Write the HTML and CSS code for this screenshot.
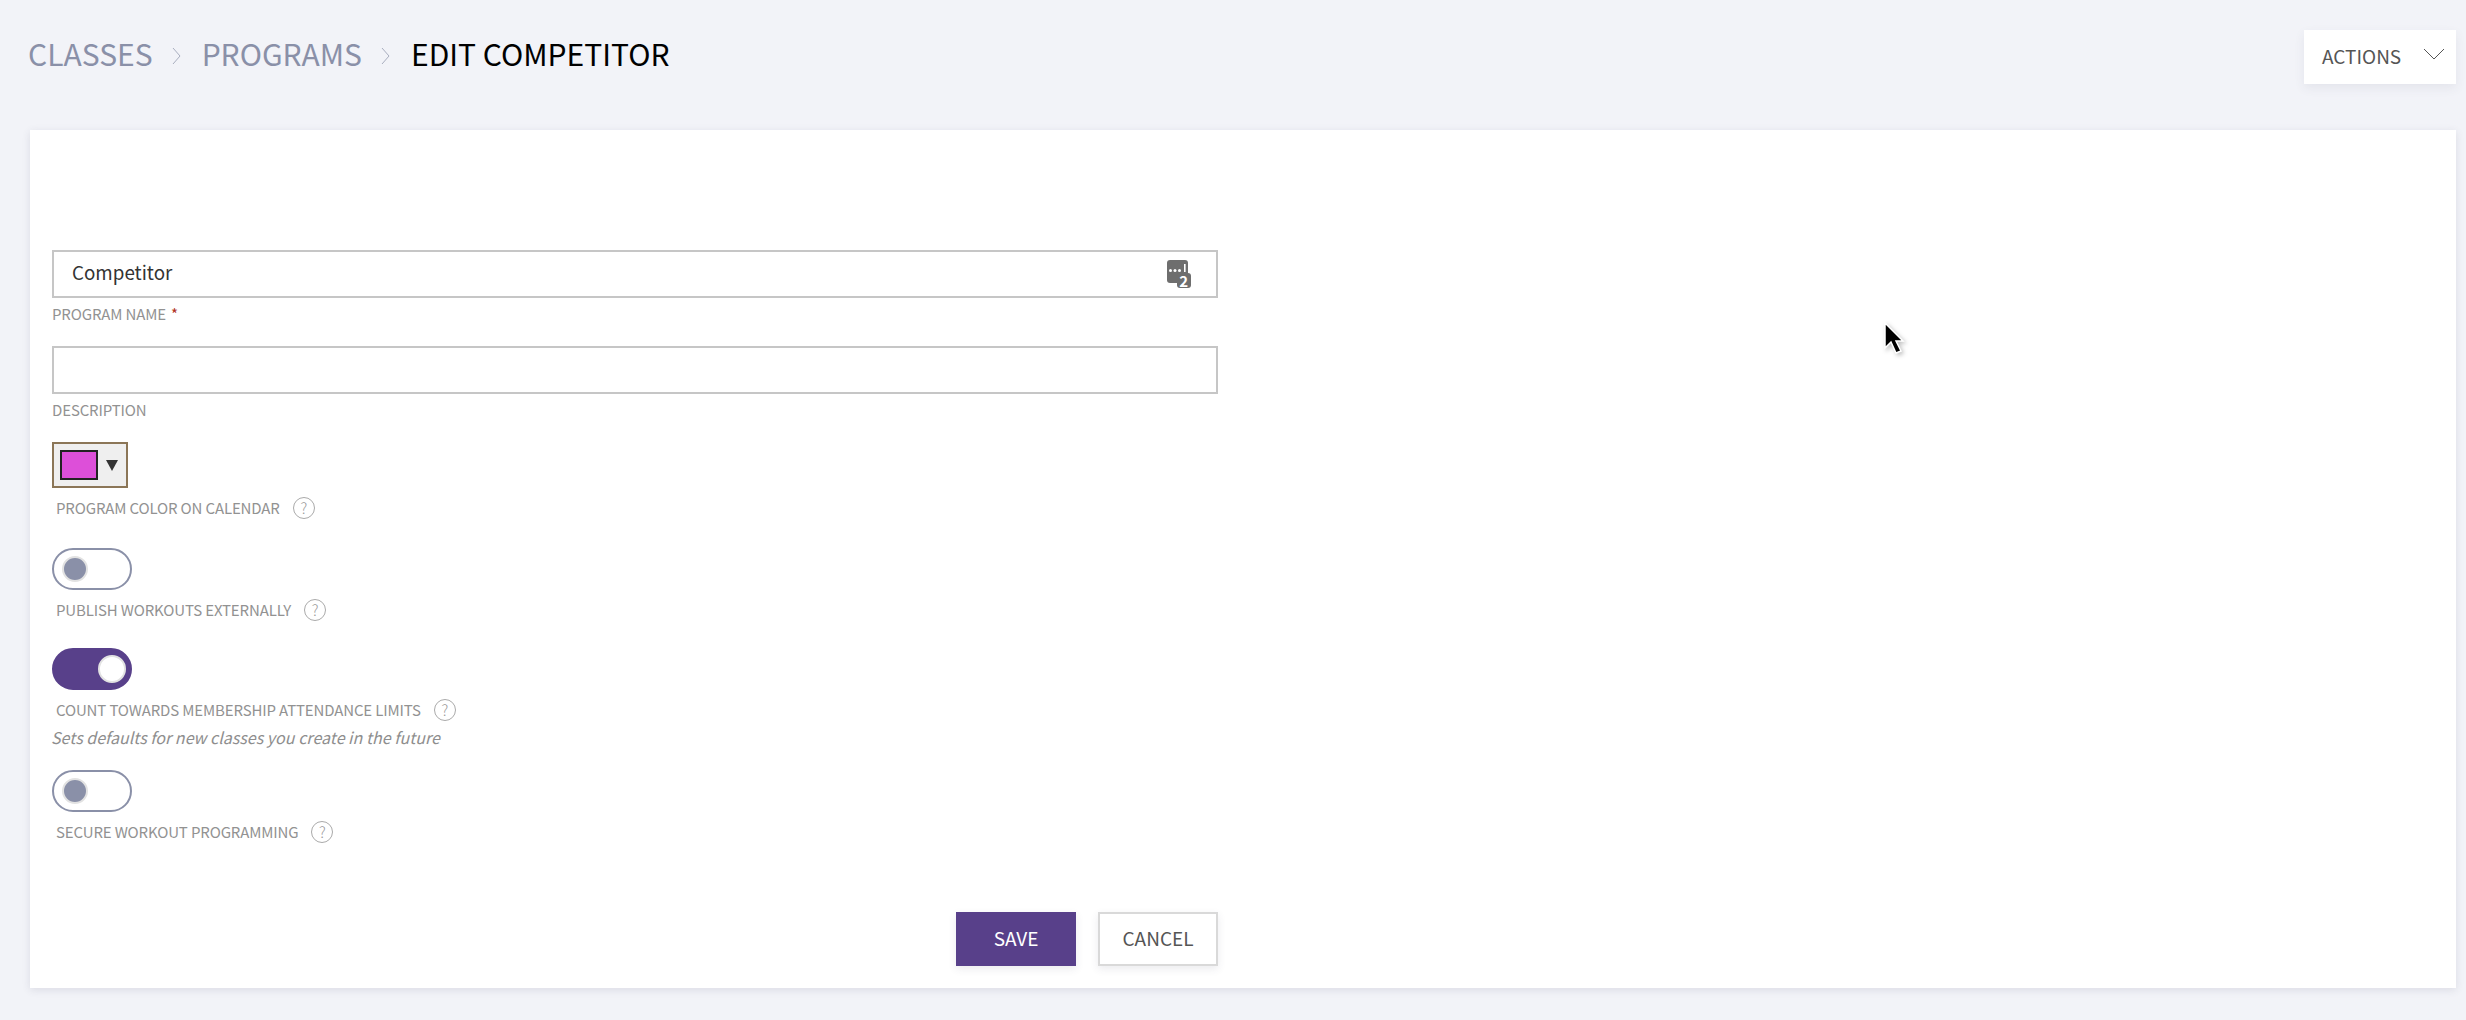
FILE: index.html
```html
<!DOCTYPE html>
<html lang="en">
<head>
<meta charset="utf-8">
<title>Edit Competitor</title>
<link rel="stylesheet" href="styles.css">
</head>
<body>
<header class="topbar">
  <nav class="crumbs">
    <a class="crumb">CLASSES</a>
    <svg class="crumb-sep" viewBox="0 0 10 18" width="10" height="18"><path d="M1 1l7 8-7 8" fill="none" stroke="#a9aebf" stroke-width="1"/></svg>
    <a class="crumb">PROGRAMS</a>
    <svg class="crumb-sep" viewBox="0 0 10 18" width="10" height="18"><path d="M1 1l7 8-7 8" fill="none" stroke="#a9aebf" stroke-width="1"/></svg>
    <span class="crumb crumb-current">EDIT COMPETITOR</span>
  </nav>
  <button class="actions" type="button">
    <span>ACTIONS</span>
    <svg viewBox="0 0 22 12" width="22" height="12"><path d="M1 1l10 10L21 1" fill="none" stroke="#555" stroke-width="1"/></svg>
  </button>
</header>

<main class="card">
  <form class="form">
    <div class="text-input">
      <span class="input-value">Competitor</span>
      <span class="pw-icon">
        <svg viewBox="0 0 24 28" width="24" height="28">
          <rect x="0" y="0" width="21" height="23" rx="3" fill="#6e6e6e"/>
          <rect x="10" y="13" width="14" height="15" rx="3" fill="#6e6e6e"/>
          <circle cx="3.5" cy="10.500" r="1.500" fill="#fff"/><circle cx="8" cy="10.500" r="1.500" fill="#fff"/><circle cx="12.500" cy="10.500" r="1.500" fill="#fff"/>
          <rect x="17" y="4" width="1.600" height="8" fill="#fff"/>
        </svg>
        <span class="pw-digit">2</span>
      </span>
    </div>
    <div class="label label-first">PROGRAM NAME<span class="req">*</span></div>

    <div class="text-input"></div>
    <div class="label label-first">DESCRIPTION</div>

    <div class="color-input">
      <span class="swatch"></span>
      <svg viewBox="0 0 12 12" width="12" height="12"><path d="M0 1h12L6 12z" fill="#333"/></svg>
    </div>
    <div class="label label-help label-color">PROGRAM COLOR ON CALENDAR<span class="help">?</span></div>

    <div class="toggle"><span class="knob"></span></div>
    <div class="label label-help label-toggle">PUBLISH WORKOUTS EXTERNALLY<span class="help">?</span></div>

    <div class="toggle toggle-on"><span class="knob"></span></div>
    <div class="label label-help label-toggle">COUNT TOWARDS MEMBERSHIP ATTENDANCE LIMITS<span class="help">?</span></div>
    <div class="hint">Sets defaults for new classes you create in the future</div>

    <div class="toggle"><span class="knob"></span></div>
    <div class="label label-help label-last">SECURE WORKOUT PROGRAMMING<span class="help">?</span></div>

    <div class="buttons">
      <button class="btn btn-save" type="button">SAVE</button>
      <button class="btn btn-cancel" type="button">CANCEL</button>
    </div>
  </form>
</main>

<svg class="cursor" viewBox="0 0 24 38" width="24" height="38">
  <path d="M3 2v25l6-6 5 11 5-2-5-10h7z" fill="#000" stroke="#fff" stroke-width="1.5"/>
</svg>
</body>
</html>
```
FILE: styles.css
```css
* { box-sizing: border-box; }
html, body { margin: 0; padding: 0; }
body {
  width: 2466px;
  height: 1020px;
  overflow: hidden;
  background: #f2f3f8;
  font-family: "Noto Sans CJK SC", "Noto Sans", sans-serif;
  color: #333;
  position: relative;
}
.topbar {
  height: 130px;
  padding: 30px 10px 0 28px;
  display: flex;
  justify-content: space-between;
  align-items: flex-start;
}
.crumbs {
  display: flex;
  align-items: center;
  height: 50px;
  margin-top: -2px;
}
.crumb { font-size: 30px; line-height: 50px; color: #8a90a8; }
.crumb-current { color: #000; }
.crumb-sep { margin: 6px 20px 0 19px; }
.actions {
  width: 152px;
  height: 54px;
  border: 0;
  background: #fff;
  display: flex;
  justify-content: space-between;
  align-items: center;
  padding: 0 11px 3px 18px;
  font: inherit;
  font-size: 19px;
  color: #555;
  box-shadow: 0 4px 10px rgba(60, 60, 90, .08);
}
.actions svg { margin-top: -3px; }
.card {
  margin: 0 10px 0 30px;
  height: 858px;
  background: #fff;
  padding: 120px 0 0 22px;
  box-shadow: 0 2px 8px rgba(60, 60, 90, .12);
}
.form { width: 1166px; }
.text-input {
  height: 48px;
  border: 2px solid #c6c6c6;
  padding: 0 18px;
  display: flex;
  align-items: center;
  justify-content: space-between;
  font-size: 18.8px;
  color: #333;
  background: #fff;
}
.input-value { line-height: 24px; margin-top: -4px; }
.pw-icon { position: relative; display: flex; width: 24px; height: 28px; margin-right: 7px; }
.pw-digit {
  position: absolute;
  right: 3px;
  bottom: 0;
  font-size: 15px;
  line-height: 14px;
  font-weight: 700;
  color: #fff;
}
.label {
  height: 20px;
  font-size: 15px;
  letter-spacing: -.14px;
  line-height: 20px;
  color: #929292;
  display: flex;
  align-items: center;
  white-space: nowrap;
}
.label-first { margin: 6px 0 22px; }
.req { color: #b03020; margin-left: 5px; }
.label-help { padding-left: 4px; }
.help {
  width: 22px;
  height: 22px;
  margin-left: 13px;
  border: 1px solid #aaa;
  border-radius: 50%;
  display: flex;
  align-items: center;
  justify-content: center;
  font-size: 15px;
  font-weight: 300;
  line-height: 18px;
  color: #999;
}
.color-input {
  width: 76px;
  height: 46px;
  border: 2px solid #8b7657;
  background: #efefef;
  display: flex;
  align-items: center;
  padding-left: 6px;
  gap: 8px;
}
.swatch {
  width: 38px;
  height: 30px;
  background: #dd4fd9;
  border: 2px solid #222;
}
.label-color { margin: 10px 0 30px; }
.toggle {
  width: 80px;
  height: 42px;
  border-radius: 21px;
  border: 2px solid #8a90a8;
  background: #fff;
  display: flex;
  align-items: center;
  padding-left: 8px;
}
.knob {
  width: 26px;
  height: 26px;
  border-radius: 50%;
  background: #8a90a8;
  border: 2px solid #e2e2e2;
}
.toggle-on {
  background: #58408a;
  border-color: #58408a;
  justify-content: flex-end;
  padding: 0 4px 0 0;
}
.toggle-on .knob { background: #fff; width: 28px; height: 28px; }
.label-toggle { margin: 10px 0 28px; }
.toggle-on + .label-toggle { margin-bottom: 7px; }
.hint {
  font-size: 16px;
  line-height: 20px;
  font-style: italic;
  letter-spacing: .02px;
  color: #8e8e8e;
  margin-bottom: 23px;
  margin-left: -1px;
}
.label-last { margin-top: 10px; }
.buttons {
  display: flex;
  justify-content: flex-end;
  gap: 22px;
  margin-top: 70px;
}
.btn {
  width: 120px;
  height: 54px;
  font: inherit;
  font-size: 19px;
  padding: 0 0 3px;
  box-shadow: 0 3px 8px rgba(60, 60, 90, .1);
}
.btn-save { background: #58408a; color: #fff; border: 0; }
.btn-cancel { background: #fff; color: #555; border: 2px solid #d9d9d9; }
.cursor {
  position: absolute;
  left: 1882px;
  top: 321px;
  filter: drop-shadow(2px 2px 2px rgba(0, 0, 0, .25));
}
```
